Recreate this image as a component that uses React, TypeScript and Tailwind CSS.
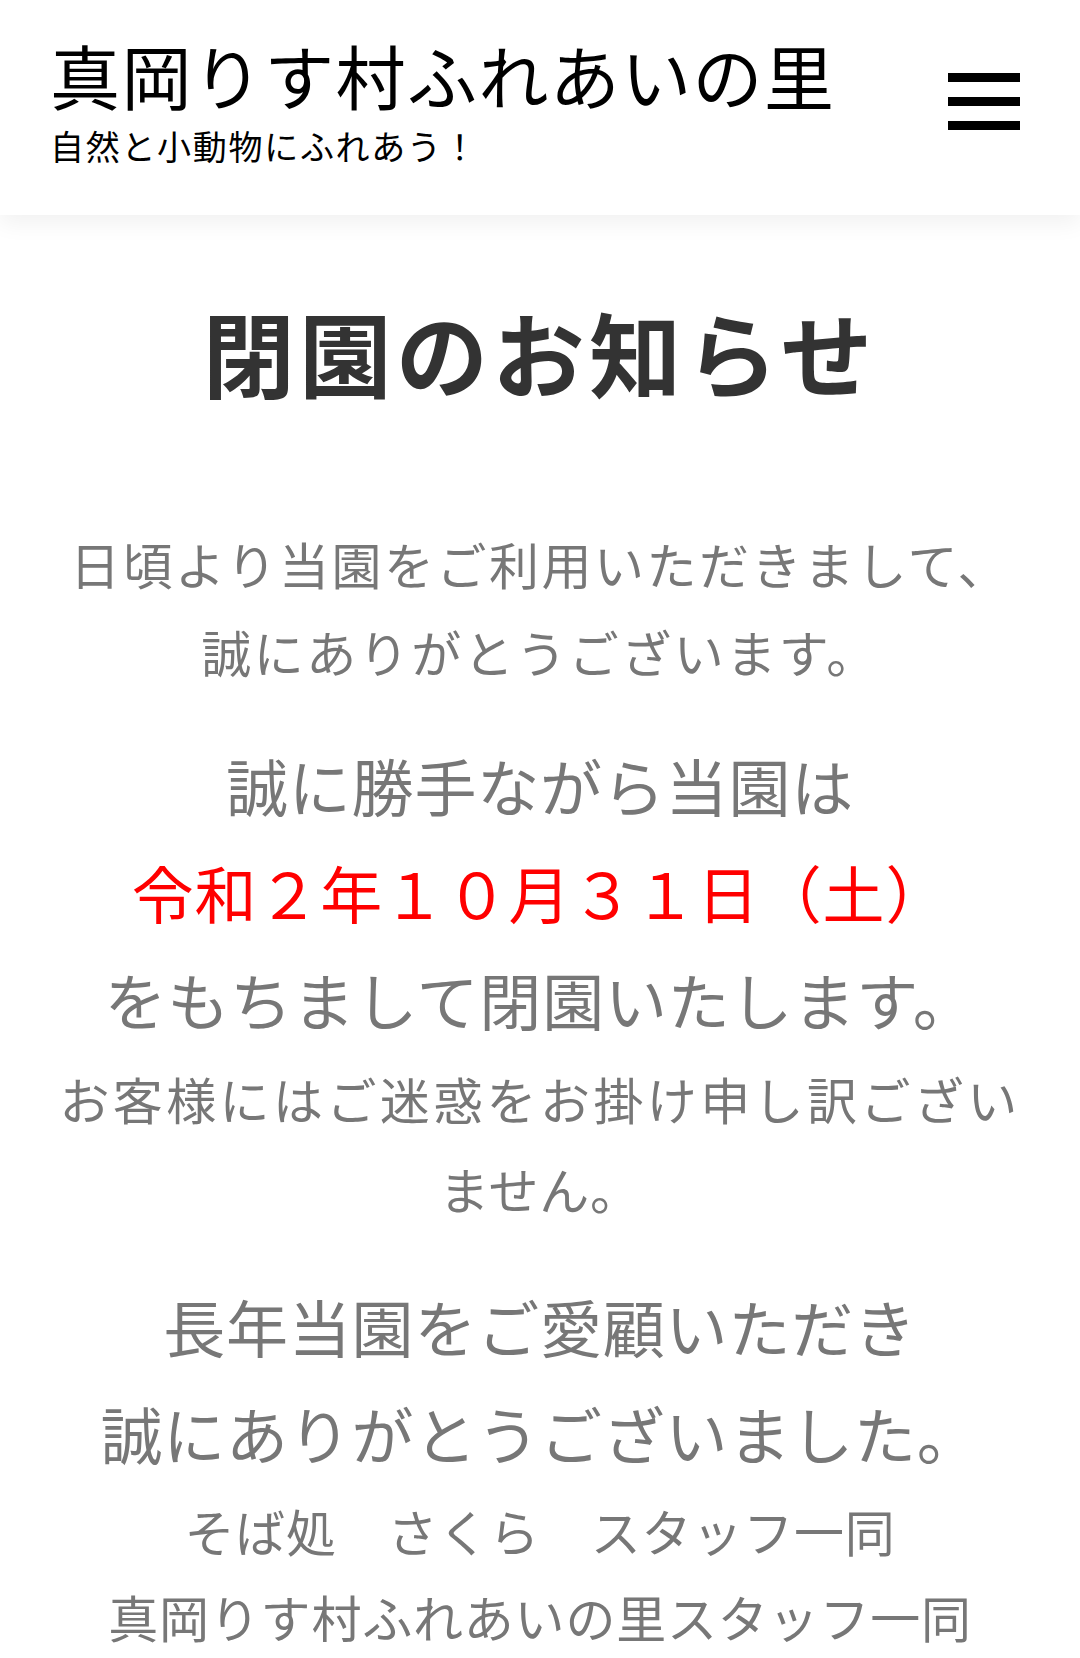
import React from 'react';

const font = { fontFamily: '"Noto Sans CJK JP", "Noto Sans", sans-serif' };

const Header: React.FC = () => (
  <header className="relative z-10 flex h-[215px] items-start justify-between bg-white pl-[50px] pr-[60px] pt-[33px] shadow-[0_8px_22px_rgba(0,0,0,0.06)]">
    <div>
      <h1 className="text-[70px] font-normal leading-[84px] tracking-[0.02em] text-black whitespace-nowrap">
        真岡りす村ふれあいの里
      </h1>
      <p className="mt-[9px] text-[34px] leading-[40px] tracking-[0.05em] text-black whitespace-nowrap">
        自然と小動物にふれあう！
      </p>
    </div>
    <button className="mt-[40px] flex flex-col gap-[15px]" aria-label="menu">
      <span className="block h-[9px] w-[72px] bg-black" />
      <span className="block h-[9px] w-[72px] bg-black" />
      <span className="block h-[9px] w-[72px] bg-black" />
    </button>
  </header>
);

const App: React.FC = () => {
  return (
    <div className="min-h-[1658px] bg-white" style={font}>
      <Header />
      <main className="px-[40px] pt-[68px] text-center text-[#777777]">
        <h2 className="mb-[101px] text-[92px] font-bold leading-[135px] tracking-[0.05em] text-[#333333]">
          閉園のお知らせ
        </h2>

        <p className="mb-[37px] text-[50px] leading-[88px] tracking-[0.05em] whitespace-nowrap">
          日頃より当園をご利用いただきまして、
          <br />
          誠にありがとうございます。
        </p>

        <div className="mb-[40px] tracking-[0.05em] whitespace-nowrap">
          <p className="text-[62px] leading-[107px]">誠に勝手ながら当園は</p>
          <p className="text-[62px] leading-[107px] text-[#ff0000]">令和２年１０月３１日（土）</p>
          <p className="text-[62px] leading-[107px]">をもちまして閉園いたします。</p>
          <p className="text-[50px] leading-[90px]">
            <span className="tracking-[0.068em]">お客様にはご迷惑をお掛け申し訳ござい</span>
            <br />
            ません。
          </p>
        </div>

        <div className="tracking-[0.05em] whitespace-nowrap">
          <p className="text-[62px] leading-[107px]">長年当園をご愛顧いただき</p>
          <p className="text-[62px] leading-[107px]">誠にありがとうございました。</p>
          <p className="text-[50px] leading-[86px]">そば処　さくら　スタッフ一同</p>
          <p className="text-[50px] leading-[86px]">真岡りす村ふれあいの里スタッフ一同</p>
        </div>
      </main>
    </div>
  );
};

export default App;
